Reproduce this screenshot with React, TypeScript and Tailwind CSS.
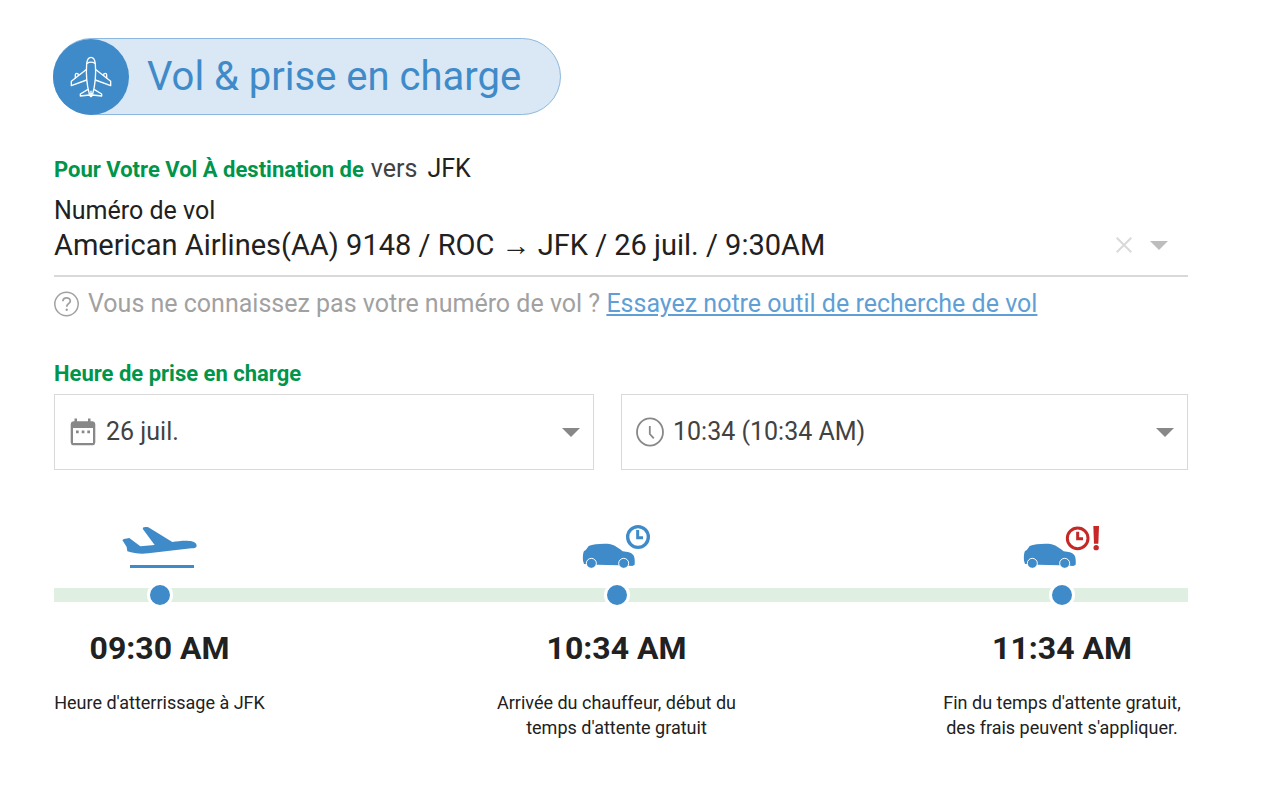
import { ReactElement, ReactNode, useState } from "react";

const FLIGHT = "American Airlines(AA) 9148 / ROC → JFK / 26 juil. / 9:30AM";

function PlaneIcon(): ReactElement {
	return (
		<svg
			viewBox="0 0 126 126"
			className="h-[42px] w-[42px]"
			fill="none"
			stroke="white"
			strokeWidth="4"
			strokeLinejoin="round"
			aria-hidden="true"
		>
			<path d="M63 4C56 4 51 13 50 24C48 50 50 85 58 114H68C76 85 78 50 76 24C75 13 70 4 63 4Z" />
			<path d="M51 22C58 18 68 18 75 22" />
			<path d="M50 40L4 76V89L50 72M76 40L122 76V89L76 72" />
			<path d="M16 67V56C16 51 25 51 25 56V60M110 67V56C110 51 101 51 101 56V60" />
			<path d="M54 100L31 114V120L58 117L63 122L68 117L95 120V114L72 100M63 104V121" />
		</svg>
	);
}

function HelpIcon(): ReactElement {
	return (
		<svg
			viewBox="0 0 26 26"
			className="h-[26px] w-[26px] shrink-0"
			fill="none"
			stroke="#a1a1a1"
			strokeWidth="1.5"
			aria-hidden="true"
		>
			<circle cx="12.5" cy="13" r="11.7" />
			<path
				d="M8.9 10.2C9 5.8 16.3 5.8 16.3 10C16.3 12.6 12.7 12.8 12.7 15.7"
				strokeWidth="1.8"
			/>
			<circle cx="12.7" cy="18.8" r="1.2" fill="#a1a1a1" stroke="none" />
		</svg>
	);
}

function CalendarIcon(): ReactElement {
	return (
		<svg
			viewBox="0 0 26 28"
			className="h-7 w-[26px]"
			fill="#888888"
			aria-hidden="true"
		>
			<path
				fillRule="evenodd"
				d="M4.5 0.5H7V3.2H18V0.5H20.5V3.2H22.5A3 3 0 0 1 25.3 6V24.5A3 3 0 0 1 22.5 27.3H3.5A3 3 0 0 1 .7 24.5V6A3 3 0 0 1 3.5 3.2H4.5ZM3 10V25H23V10Z"
			/>
			<path d="M6 12.6H8.7V15.3H6ZM11.7 12.6H14.4V15.3H11.7ZM17.3 12.6H20V15.3H17.3Z" />
		</svg>
	);
}

function ClockIcon(): ReactElement {
	return (
		<svg
			viewBox="0 0 28 30"
			className="h-[30px] w-7"
			fill="none"
			stroke="#888888"
			strokeWidth="1.8"
			aria-hidden="true"
		>
			<ellipse cx="14" cy="15" rx="13" ry="13.6" />
			<path d="M13.8 9V17L17.8 21.3" />
		</svg>
	);
}

function Caret({ color }: { color: string }): ReactElement {
	return (
		<svg
			viewBox="0 0 18 9"
			className="h-[9px] w-[18px] shrink-0"
			fill={color}
			aria-hidden="true"
		>
			<path d="M0 0H18L9 9Z" />
		</svg>
	);
}

function LandingIcon(): ReactElement {
	return (
		<svg
			viewBox="60 30 240 135"
			className="h-[45px] w-20"
			fill="#3f8bc9"
			aria-hidden="true"
		>
			<path d="M67 75L72 72L88 69L121 94L164 90L129 43C126 36 134 35 145 37L217 81C235 78 262 75 275 79C285 81 290 86 290 92C290 98 284 99 274 100L145 115C122 118 102 115 82 109L80 96Z" />
			<path d="M90 150H282V159H90Z" />
		</svg>
	);
}

function CarShape(): ReactElement {
	return (
		<g>
			<path
				fill="#3f8bc9"
				d="M39 137C38 125 39 114 42 108C47 108 51 99 56 93C72 87 104 85 122 88C138 92 148 102 158 109C172 110 184 113 189 119C194 124 195 137 194 149L187 153L178 152L147 151L80 149L42 147Z"
			/>
			<g fill="#3f8bc9" stroke="white" strokeWidth="3">
				<circle cx="64" cy="145" r="15" />
				<circle cx="161" cy="145" r="15" />
			</g>
		</g>
	);
}

function ArrivalIcon(): ReactElement {
	return (
		<svg
			viewBox="36 30 207 135"
			className="h-[45px] w-[69px]"
			aria-hidden="true"
		>
			<CarShape />
			<g fill="none" stroke="#3f8bc9">
				<circle cx="204" cy="66" r="31" strokeWidth="10" />
				<path d="M203 45V68H219" strokeWidth="9" />
			</g>
		</svg>
	);
}

function WaitEndIcon(): ReactElement {
	return (
		<svg
			viewBox="36 30 240 135"
			className="h-[45px] w-20"
			aria-hidden="true"
		>
			<g transform="translate(3 0)">
				<CarShape />
			</g>
			<g fill="none" stroke="#c62828">
				<circle cx="203" cy="70" r="31" strokeWidth="9" />
				<path d="M203 50V71H219" strokeWidth="9" />
			</g>
			<g fill="#c62828">
				<path d="M250 33H267L265 86H252Z" />
				<circle cx="258.5" cy="98" r="8" />
			</g>
		</svg>
	);
}

interface SelectBoxProps {
	label: string;
	value: string;
	icon: ReactNode;
}

function SelectBox({ label, value, icon }: SelectBoxProps): ReactElement {
	return (
		<div className="relative flex h-[76px] items-center border border-[#d9d9d9]">
			<span className="pointer-events-none absolute left-3 flex w-8 justify-center">
				{icon}
			</span>
			<select
				aria-label={label}
				className="h-full w-full appearance-none bg-transparent pr-12 pl-[51px] text-[25px] text-[#424242]"
			>
				<option>{value}</option>
			</select>
			<span className="pointer-events-none absolute right-[13px]">
				<Caret color="#888888" />
			</span>
		</div>
	);
}

interface StepProps {
	icon: ReactNode;
	time: string;
	className?: string;
	children: ReactNode;
}

function Step({ icon, time, className, children }: StepProps): ReactElement {
	return (
		<li className={`flex flex-col items-center text-center ${className ?? ""}`}>
			{icon}
			<span className="relative mt-3 h-[26px] w-[26px] rounded-full border-3 border-white bg-[#3f8bc9]" />
			<strong className="mt-5 text-[32px] leading-10 font-bold whitespace-nowrap">
				{time}
			</strong>
			<p className="mt-[22px] text-[18px] leading-[25px] whitespace-nowrap">
				{children}
			</p>
		</li>
	);
}

export default function App(): ReactElement {
	const [flight, setFlight] = useState(FLIGHT);

	return (
		<main className="min-h-screen bg-white pt-[38px] pr-[82px] pb-16 pl-[54px] font-['Roboto','Liberation_Serif',sans-serif] text-[#212121]">
			<header className="-ml-px flex h-[77px] w-fit items-center rounded-full border border-[#8cb8df] bg-[#dae7f4] pr-[39px]">
				<span className="-ml-px flex h-[76px] w-[76px] items-center justify-center rounded-full bg-[#3f8bc9]">
					<PlaneIcon />
				</span>
				<h1 className="ml-[18px] text-[40px] leading-[48px] text-[#3f8bc9]">
					Vol &amp; prise en charge
				</h1>
			</header>

			<section className="mt-[39px]">
				<div className="flex items-baseline text-[25px] leading-[30px]">
					<h2 className="text-[22px] font-bold text-[#00954a]">
						Pour Votre Vol À destination de
					</h2>
					<span className="ml-[7px] text-[#424242]">vers</span>
					<span className="ml-[10px]">JFK</span>
				</div>
				<label
					htmlFor="flight"
					className="mt-[11px] block text-[25px] leading-[29px]"
				>
					Numéro de vol
				</label>
				<div className="relative border-b-2 border-[#d9d9d9] pb-[10px]">
					<select
						id="flight"
						value={flight}
						onChange={(e) => setFlight(e.target.value)}
						className="block h-10 w-full appearance-none bg-transparent pr-24 text-[29px] leading-10"
					>
						<option value="" />
						<option value={FLIGHT}>{FLIGHT}</option>
					</select>
					<div className="pointer-events-none absolute top-0 right-5 flex h-10 items-center gap-[18px]">
						<button
							type="button"
							aria-label="Effacer le vol"
							onClick={() => setFlight("")}
							className="pointer-events-auto"
						>
							<svg
								viewBox="0 0 16 16"
								className="h-4 w-4"
								stroke="#d9d9d9"
								strokeWidth="2"
								aria-hidden="true"
							>
								<path d="M.7 .7L15.3 15.3M15.3 .7L.7 15.3" />
							</svg>
						</button>
						<Caret color="#bdbdbd" />
					</div>
				</div>
				<p className="mt-3 flex items-center text-[25px] leading-[30px] text-[#a1a1a1]">
					<HelpIcon />
					<span className="ml-2">
						Vous ne connaissez pas votre numéro de vol ?{" "}
						<a href="#recherche" className="text-[#5f9fd5] underline">
							Essayez notre outil de recherche de vol
						</a>
					</span>
				</p>
			</section>

			<section className="mt-10">
				<h2 className="text-[22px] leading-[30px] font-bold text-[#00954a]">
					Heure de prise en charge
				</h2>
				<div className="mt-[5px] grid grid-cols-[20fr_21fr] gap-[27px]">
					<SelectBox
						label="Date de prise en charge"
						value="26 juil."
						icon={<CalendarIcon />}
					/>
					<SelectBox
						label="Heure de prise en charge"
						value="10:34 (10:34 AM)"
						icon={<ClockIcon />}
					/>
				</div>
			</section>

			<section className="relative mt-[55px]">
				<div className="absolute inset-x-0 top-[63px] h-[14px] bg-[#dff0e2]" />
				<ol className="grid grid-cols-[211px_1fr_252px]">
					<Step icon={<LandingIcon />} time="09:30 AM">
						Heure d'atterrissage à JFK
					</Step>
					<Step icon={<ArrivalIcon />} time="10:34 AM" className="pl-8">
						Arrivée du chauffeur, début du
						<br />
						temps d'attente gratuit
					</Step>
					<Step icon={<WaitEndIcon />} time="11:34 AM">
						Fin du temps d'attente gratuit,
						<br />
						des frais peuvent s'appliquer.
					</Step>
				</ol>
			</section>
		</main>
	);
}
